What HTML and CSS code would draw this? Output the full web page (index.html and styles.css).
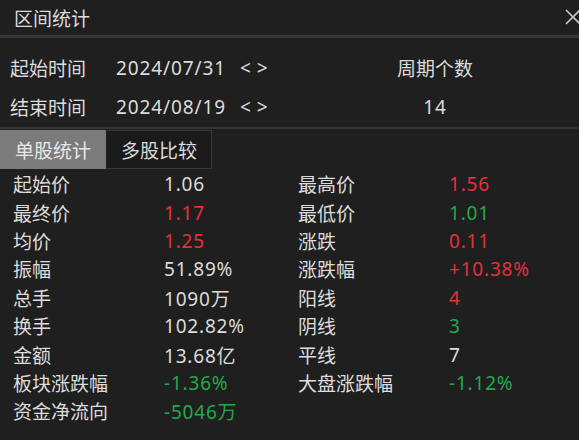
FILE: index.html
```html
<!DOCTYPE html>
<html lang="zh">
<head>
<meta charset="utf-8">
<link rel="stylesheet" href="styles.css">
</head>
<body>
<div class="panel">
  <div class="titlebar">
    <span class="title">区间统计</span>
    <svg class="close" width="16" height="16" viewBox="0 0 16 16"><path d="M1 1L15 15M15 1L1 15" stroke="#c8c8c8" stroke-width="1.6" fill="none"/></svg>
  </div>
  <div class="period">
    <div class="prow">
      <span class="plabel">起始时间</span>
      <span class="pdate num">2024/07/31</span>
      <span class="arrows">&lt; &gt;</span>
      <span class="pright">周期个数</span>
    </div>
    <div class="prow">
      <span class="plabel">结束时间</span>
      <span class="pdate num">2024/08/19</span>
      <span class="arrows">&lt; &gt;</span>
      <span class="pright num">14</span>
    </div>
  </div>
  <div class="tabs">
    <div class="tab active">单股统计</div>
    <div class="tab">多股比较</div>
  </div>
  <div class="stats">
    <span class="k">起始价</span><span class="v">1.06</span><span class="k">最高价</span><span class="v red">1.56</span>
    <span class="k">最终价</span><span class="v red">1.17</span><span class="k">最低价</span><span class="v green">1.01</span>
    <span class="k">均价</span><span class="v red">1.25</span><span class="k">涨跌</span><span class="v red">0.11</span>
    <span class="k">振幅</span><span class="v">51.89%</span><span class="k">涨跌幅</span><span class="v red">+10.38%</span>
    <span class="k">总手</span><span class="v">1090万</span><span class="k">阳线</span><span class="v red">4</span>
    <span class="k">换手</span><span class="v">102.82%</span><span class="k">阴线</span><span class="v green">3</span>
    <span class="k">金额</span><span class="v">13.68亿</span><span class="k">平线</span><span class="v">7</span>
    <span class="k">板块涨跌幅</span><span class="v green">-1.36%</span><span class="k">大盘涨跌幅</span><span class="v green">-1.12%</span>
    <span class="k">资金净流向</span><span class="v green">-5046万</span><span class="k"></span><span class="v"></span>
  </div>
</div>
</body>
</html>
```
FILE: styles.css
```css
html, body {
  margin: 0;
  padding: 0;
  background: #1f1f1f;
}
.panel {
  width: 579px;
  height: 440px;
  overflow: hidden;
  background: #1f1f1f;
  color: #dcdcdc;
  font-family: "Noto Sans", "Noto Sans CJK SC", sans-serif;
  font-size: 19px;
}
.titlebar {
  height: 35px;
  display: flex;
  align-items: center;
  justify-content: space-between;
  padding-left: 14px;
  border-bottom: 3px solid #353535;
}
.title {
  margin-top: 1px;
}
.close {
  margin-right: -2px;
  margin-top: -2px;
}
.period {
  height: 91px;
  display: flex;
  flex-direction: column;
  justify-content: center;
  gap: 9px;
  border-bottom: 2px solid #353535;
  padding-top: 9px;
  box-sizing: border-box;
}
.prow {
  display: flex;
  align-items: center;
  height: 30px;
}
.num {
  letter-spacing: 0.9px;
}
.plabel {
  width: 106px;
  padding-left: 10px;
}
.pdate {
  width: 124px;
}
.arrows {
  width: 110px;
  letter-spacing: 0.5px;
}
.pright {
  width: 170px;
  text-align: center;
}
.tabs {
  display: flex;
  height: 39px;
  margin-top: 1px;
}
.tab {
  width: 105px;
  box-sizing: border-box;
  display: flex;
  align-items: center;
  justify-content: center;
  background: #1a1a1a;
  border: 1px solid #3a3a3a;
  border-left: none;
  margin-left: 1px;
}
.tab.active {
  background: #7b7b7b;
  color: #e8e8e8;
  border: none;
  margin-left: 0;
  width: 106px;
}
.stats {
  display: grid;
  grid-template-columns: 151px 134px 151px 1fr;
  grid-auto-rows: 28.4px;
  align-items: center;
  padding-left: 13px;
  margin-top: 1px;
}
.v {
  letter-spacing: 0.8px;
}
.red { color: #e5303a; }
.green { color: #1faa4a; }
```
